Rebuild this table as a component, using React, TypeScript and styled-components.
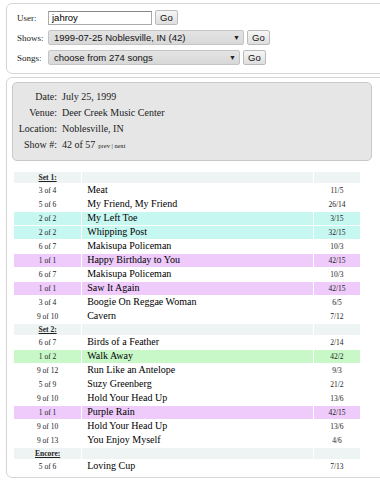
import React from "react";
import styled, { createGlobalStyle } from "styled-components";

const Global = createGlobalStyle`
  html, body { margin: 0; padding: 0; background: #fff; overflow: hidden; }
  body { font-family: "Liberation Serif", "Times New Roman", serif; color: #000; }
`;

const SANS = `"Liberation Sans", Arial, sans-serif`;

const Page = styled.div`
  width: 380px;
  height: 485px;
  overflow: hidden;
  padding-top: 3px;
  box-sizing: border-box;
`;

const Panel = styled.div<{ $pad: string; $mt?: number }>`
  margin-left: 6px;
  margin-top: ${(p) => p.$mt ?? 0}px;
  width: 400px;
  border: 1px solid #d6d6d6;
  border-radius: 6px;
  padding: ${(p) => p.$pad};
  box-sizing: border-box;
`;

const FormGrid = styled.div`
  display: grid;
  grid-template-columns: 31px auto;
  row-gap: 5px;
  align-items: center;
`;

const Label = styled.span`
  font-size: 9px;
  color: #222;
`;

const Line = styled.div`
  display: flex;
  align-items: center;
  gap: 3px;
`;

const TextInput = styled.div`
  width: 104px;
  height: 14px;
  box-sizing: border-box;
  border: 1px solid #aaa;
  border-top-color: #888;
  font-family: ${SANS};
  font-size: 9.5px;
  line-height: 12px;
  padding-left: 3px;
  background: #fff;
`;

const Button = styled.div`
  height: 15px;
  box-sizing: border-box;
  padding: 0 4px;
  border: 1px solid #bbb;
  border-radius: 2px;
  background: linear-gradient(#f6f6f6, #dedede);
  font-family: ${SANS};
  font-size: 9.5px;
  line-height: 13px;
  color: #111;
`;

const Select = styled.div<{ $w: number }>`
  width: ${(p) => p.$w}px;
  height: 15px;
  box-sizing: border-box;
  border: 1px solid #c4c4c4;
  border-radius: 2px;
  background: linear-gradient(#e4e4e4, #d8d8d8);
  font-family: ${SANS};
  font-size: 9.5px;
  line-height: 13px;
  padding-left: 5px;
  display: flex;
  justify-content: space-between;
  align-items: center;
  color: #111;
`;

const Arrow = styled.span`
  font-size: 7px;
  margin-right: 3px;
  color: #222;
`;

const InfoBox = styled.div`
  width: 360px;
  box-sizing: border-box;
  background: #e5e6e5;
  border: 1px solid #c9c9c9;
  border-radius: 5px;
  padding: 6px 0 6px 0;
  display: grid;
  grid-template-columns: 44px auto;
  column-gap: 5px;
  font-size: 10px;
  line-height: 16px;
  color: #222;
`;

const InfoLabel = styled.span`
  text-align: right;
`;

const Small = styled.span`
  font-size: 6.5px;
  margin-left: 3px;
`;

const Table = styled.table`
  margin: 10px 0 0 1px;
  border-collapse: separate;
  border-spacing: 1px;
  width: 348px;
  table-layout: fixed;
`;

const Cell = styled.td<{ $bg?: string; $head?: boolean }>`
  background: ${(p) => p.$bg ?? "transparent"};
  height: ${(p) => (p.$head ? 11 : 13)}px;
  padding: 0;
  font-size: 8px;
  line-height: ${(p) => (p.$head ? 11 : 12)}px;
`;

const NumCell = styled(Cell)`
  font-size: 7.5px;
  text-align: center;
  color: #222;
  padding-top: ${(p) => (p.$head ? 0 : 1)}px;
  height: ${(p) => (p.$head ? 11 : 12)}px;
  vertical-align: top;
`;

const SongCell = styled(Cell)`
  font-size: 10px;
  line-height: 12px;
  padding-left: 5px;
  vertical-align: top;
  white-space: nowrap;
`;

const SetHead = styled.span`
  font-size: 7.5px;
  font-weight: bold;
  text-decoration: underline;
`;

const HEAD = "#eef3f3";
const COLORS: Record<string, string> = {
  c: "#c6f7f1",
  p: "#eecbfb",
  g: "#c8f8c8",
};

type Song = { n: string; s: string; r: string; c?: string };
type Row = { h: string } | Song;

const rows: Row[] = [
  { h: "Set 1:" },
  { n: "3 of 4", s: "Meat", r: "11/5" },
  { n: "5 of 6", s: "My Friend, My Friend", r: "26/14" },
  { n: "2 of 2", s: "My Left Toe", r: "3/15", c: "c" },
  { n: "2 of 2", s: "Whipping Post", r: "32/15", c: "c" },
  { n: "6 of 7", s: "Makisupa Policeman", r: "10/3" },
  { n: "1 of 1", s: "Happy Birthday to You", r: "42/15", c: "p" },
  { n: "6 of 7", s: "Makisupa Policeman", r: "10/3" },
  { n: "1 of 1", s: "Saw It Again", r: "42/15", c: "p" },
  { n: "3 of 4", s: "Boogie On Reggae Woman", r: "6/5" },
  { n: "9 of 10", s: "Cavern", r: "7/12" },
  { h: "Set 2:" },
  { n: "6 of 7", s: "Birds of a Feather", r: "2/14" },
  { n: "1 of 2", s: "Walk Away", r: "42/2", c: "g" },
  { n: "9 of 12", s: "Run Like an Antelope", r: "9/3" },
  { n: "5 of 9", s: "Suzy Greenberg", r: "21/2" },
  { n: "9 of 10", s: "Hold Your Head Up", r: "13/6" },
  { n: "1 of 1", s: "Purple Rain", r: "42/15", c: "p" },
  { n: "9 of 10", s: "Hold Your Head Up", r: "13/6" },
  { n: "9 of 13", s: "You Enjoy Myself", r: "4/6" },
  { h: "Encore:" },
  { n: "5 of 6", s: "Loving Cup", r: "7/13" },
];

export default function App() {
  return (
    <Page>
      <Global />
      <Panel $pad="6px 10px 8px 10px">
        <FormGrid>
          <Label>User:</Label>
          <Line>
            <TextInput>jahroy</TextInput>
            <Button>Go</Button>
          </Line>
          <Label>Shows:</Label>
          <Line>
            <Select $w={196}>
              1999-07-25 Noblesville, IN (42)
              <Arrow>▼</Arrow>
            </Select>
            <Button>Go</Button>
          </Line>
          <Label>Songs:</Label>
          <Line>
            <Select $w={192}>
              choose from 274 songs
              <Arrow>▼</Arrow>
            </Select>
            <Button>Go</Button>
          </Line>
        </FormGrid>
      </Panel>
      <Panel $pad="4px 5px 3px 5px" $mt={3}>
        <InfoBox>
          <InfoLabel>Date:</InfoLabel>
          <span>July 25, 1999</span>
          <InfoLabel>Venue:</InfoLabel>
          <span>Deer Creek Music Center</span>
          <InfoLabel>Location:</InfoLabel>
          <span>Noblesville, IN</span>
          <InfoLabel>Show #:</InfoLabel>
          <span>
            42 of 57<Small>prev | next</Small>
          </span>
        </InfoBox>
        <Table>
          <colgroup>
            <col style={{ width: 67 }} />
            <col style={{ width: 230 }} />
            <col style={{ width: 46 }} />
          </colgroup>
          <tbody>
            {rows.map((r, i) => {
              if ("h" in r) {
                return (
                  <tr key={i}>
                    <NumCell $bg={HEAD} $head>
                      <SetHead>{r.h}</SetHead>
                    </NumCell>
                    <Cell $bg={HEAD} $head />
                    <Cell $bg={HEAD} $head />
                  </tr>
                );
              }
              const bg = r.c ? COLORS[r.c] : undefined;
              return (
                <tr key={i}>
                  <NumCell $bg={bg}>{r.n}</NumCell>
                  <SongCell $bg={bg}>{r.s}</SongCell>
                  <NumCell $bg={bg}>{r.r}</NumCell>
                </tr>
              );
            })}
          </tbody>
        </Table>
      </Panel>
    </Page>
  );
}
